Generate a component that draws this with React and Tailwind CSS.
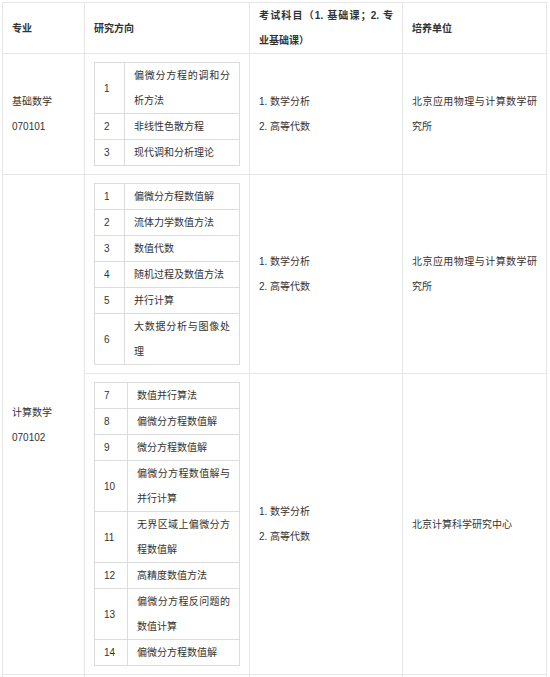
const dirs1 = [
  ['1', '偏微分方程的调和分析方法'],
  ['2', '非线性色散方程'],
  ['3', '现代调和分析理论'],
];

const dirs2 = [
  ['1', '偏微分方程数值解'],
  ['2', '流体力学数值方法'],
  ['3', '数值代数'],
  ['4', '随机过程及数值方法'],
  ['5', '并行计算'],
  ['6', '大数据分析与图像处理'],
];

const dirs3 = [
  ['7', '数值并行算法'],
  ['8', '偏微分方程数值解'],
  ['9', '微分方程数值解'],
  ['10', '偏微分方程数值解与并行计算'],
  ['11', '无界区域上偏微分方程数值解'],
  ['12', '高精度数值方法'],
  ['13', '偏微分方程反问题的数值计算'],
  ['14', '偏微分方程数值解'],
];

const cell = 'border border-[#e6e6e6] px-[9px] py-0 align-middle text-justify';

const Directions = ({ rows, numWidth }) => (
  <table className="my-2 w-[146px] table-fixed border-collapse">
    <colgroup>
      <col className={numWidth} />
      <col />
    </colgroup>
    <tbody>
      {rows.map(([n, t]) => (
        <tr key={n}>
          <td className="border border-[#dcdcdc] px-[9px] py-0 align-middle">{n}</td>
          <td className="border border-[#dcdcdc] px-[9px] py-0 align-middle text-justify">{t}</td>
        </tr>
      ))}
    </tbody>
  </table>
);

const Exams = () => (
  <>
    <p>1. 数学分析</p>
    <p>2. 高等代数</p>
  </>
);

export default function App() {
  return (
    <div
      className="bg-white pl-[2px] pt-[2px] text-[10px] leading-[25px] text-[#333333]"
      style={{ fontFamily: '"Liberation Sans", "Noto Sans CJK SC", sans-serif' }}
    >
      <table className="w-[544px] table-fixed border-collapse">
        <colgroup>
          <col className="w-[82px]" />
          <col className="w-[165px]" />
          <col className="w-[153px]" />
          <col className="w-[144px]" />
        </colgroup>
        <thead>
          <tr className="h-[51px] font-bold">
            <th className={cell}>专业</th>
            <th className={cell}>研究方向</th>
            <th className={cell}>
              <span className="block [text-align-last:justify]">考试科目（1. 基础课；2. 专</span>
              业基础课）
            </th>
            <th className={cell}>培养单位</th>
          </tr>
        </thead>
        <tbody>
          <tr>
            <td className={cell}>
              <p>基础数学</p>
              <p>070101</p>
            </td>
            <td className={cell}>
              <Directions rows={dirs1} numWidth="w-[30px]" />
            </td>
            <td className={cell}>
              <Exams />
            </td>
            <td className={cell}>北京应用物理与计算数学研究所</td>
          </tr>
          <tr>
            <td className={cell} rowSpan={2}>
              <p>计算数学</p>
              <p>070102</p>
            </td>
            <td className={cell}>
              <Directions rows={dirs2} numWidth="w-[30px]" />
            </td>
            <td className={cell}>
              <Exams />
            </td>
            <td className={cell}>北京应用物理与计算数学研究所</td>
          </tr>
          <tr>
            <td className={cell}>
              <Directions rows={dirs3} numWidth="w-[33px]" />
            </td>
            <td className={cell}>
              <Exams />
            </td>
            <td className={cell}>北京计算科学研究中心</td>
          </tr>
          <tr className="h-[40px]">
            <td className={cell}></td>
            <td className={cell}></td>
            <td className={cell}></td>
            <td className={cell}></td>
          </tr>
        </tbody>
      </table>
    </div>
  );
}
